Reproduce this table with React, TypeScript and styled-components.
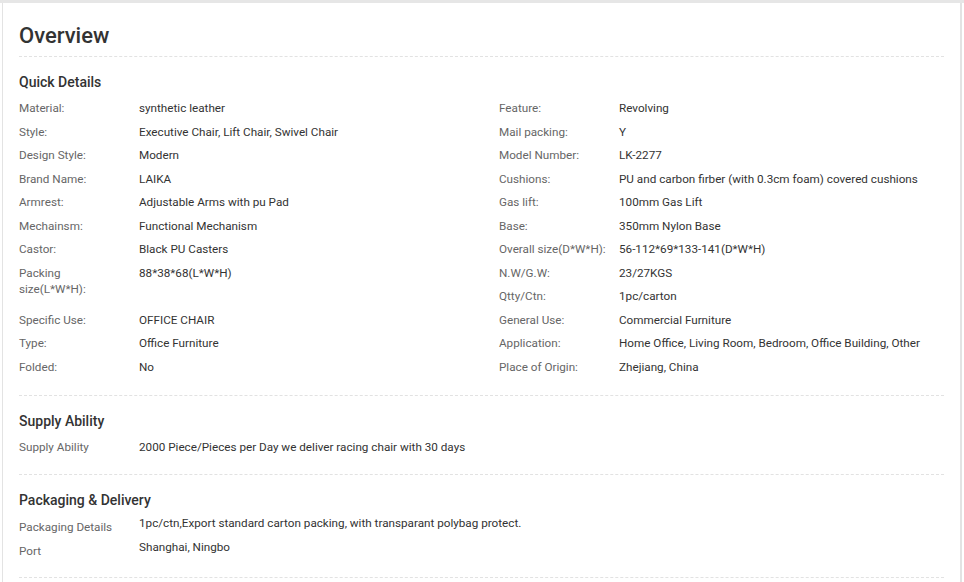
import React from "react";
import styled, { createGlobalStyle } from "styled-components";

const Global = createGlobalStyle`
  html, body { margin: 0; padding: 0; background: #fff; }
  body { font-family: Roboto, "Liberation Sans", Arial, sans-serif; -webkit-font-smoothing: antialiased; }
`;

const Frame = styled.div`
  width: 964px;
  height: 582px;
  overflow: hidden;
  border-top: 3px solid #e6e6e6;
  box-sizing: border-box;
`;

const Card = styled.div`
  margin-left: 2px;
  width: 960px;
  min-height: 600px;
  box-sizing: border-box;
  border-left: 1px solid #e3e3e3;
  border-right: 2px solid #e3e3e3;
  padding: 17px 16px 0 16px;
`;

const Title = styled.h1`
  margin: 0;
  font-size: 22px;
  line-height: 31px;
  font-weight: 500;
  color: #333;
  padding-bottom: 5px;
  border-bottom: 1px dashed #e2e2e2;
`;

const Section = styled.section`
  padding: 15px 0 17px;
  border-bottom: 1px dashed #e2e2e2;
`;

const Heading = styled.h2`
  margin: 0 0 3px;
  font-size: 14px;
  line-height: 20px;
  font-weight: 500;
  color: #333;
`;

const Grid = styled.div<{ $cols: string }>`
  display: grid;
  grid-template-columns: ${(p) => p.$cols};
  grid-auto-rows: 23.55px;
`;

const Item = styled.div<{ $span?: number }>`
  display: flex;
  grid-row: span ${(p) => p.$span ?? 1};
  font-size: 11.7px;
  line-height: 16px;
`;

const Label = styled.div<{ $shift?: number }>`
  width: 120px;
  flex: none;
  box-sizing: border-box;
  padding: ${(p) => 5 + (p.$shift ?? 0)}px 12px 0 0;
  color: #666;
`;

const Value = styled.div<{ $shift?: number }>`
  flex: 1;
  padding-top: ${(p) => 5 + (p.$shift ?? 0)}px;
  color: #333;
`;

type Row = [string, string, number?];

const quick: Row[] = [
  ["Material:", "synthetic leather"],
  ["Feature:", "Revolving"],
  ["Style:", "Executive Chair, Lift Chair, Swivel Chair"],
  ["Mail packing:", "Y"],
  ["Design Style:", "Modern"],
  ["Model Number:", "LK-2277"],
  ["Brand Name:", "LAIKA"],
  ["Cushions:", "PU and carbon firber (with 0.3cm foam) covered cushions"],
  ["Armrest:", "Adjustable Arms with pu Pad"],
  ["Gas lift:", "100mm Gas Lift"],
  ["Mechainsm:", "Functional Mechanism"],
  ["Base:", "350mm Nylon Base"],
  ["Castor:", "Black PU Casters"],
  ["Overall size(D*W*H):", "56-112*69*133-141(D*W*H)"],
  ["Packing size(L*W*H):", "88*38*68(L*W*H)", 2],
  ["N.W/G.W:", "23/27KGS"],
  ["Qtty/Ctn:", "1pc/carton"],
  ["Specific Use:", "OFFICE CHAIR"],
  ["General Use:", "Commercial Furniture"],
  ["Type:", "Office Furniture"],
  ["Application:", "Home Office, Living Room, Bedroom, Office Building, Other"],
  ["Folded:", "No"],
  ["Place of Origin:", "Zhejiang, China"],
];

const packaging: Row[] = [
  ["Packaging Details", "1pc/ctn,Export standard carton packing, with transparant polybag protect."],
  ["Port", "Shanghai, Ningbo"],
];

export default function App() {
  return (
    <>
      <Global />
      <Frame>
        <Card>
          <Title>Overview</Title>
          <Section>
            <Heading>Quick Details</Heading>
            <Grid $cols="480px 1fr">
              {quick.map(([l, v, span]) => (
                <Item key={l} $span={span}>
                  <Label>{l}</Label>
                  <Value>{v}</Value>
                </Item>
              ))}
            </Grid>
          </Section>
          <Section>
            <Heading>Supply Ability</Heading>
            <Grid $cols="1fr">
              <Item>
                <Label>Supply Ability</Label>
                <Value>2000 Piece/Pieces per Day we deliver racing chair with 30 days</Value>
              </Item>
            </Grid>
          </Section>
          <Section>
            <Heading>Packaging &amp; Delivery</Heading>
            <Grid $cols="1fr">
              {packaging.map(([l, v]) => (
                <Item key={l}>
                  <Label $shift={1}>{l}</Label>
                  <Value $shift={-3}>{v}</Value>
                </Item>
              ))}
            </Grid>
          </Section>
        </Card>
      </Frame>
    </>
  );
}
